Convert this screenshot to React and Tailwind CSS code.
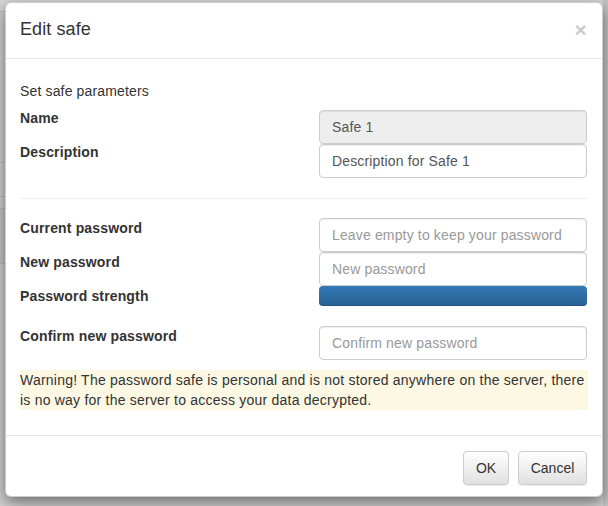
export default function App() {
  const font = { fontFamily: '"Liberation Sans", Arial, Helvetica, sans-serif' };
  const baseInput =
    "block w-full h-[34px] px-[12px] border border-[#ccc] rounded-[4px] text-[14px] text-[#555] shadow-[inset_0_1px_1px_rgba(0,0,0,0.075)] placeholder:text-[#999] outline-none tracking-[0.15px]";
  const inputCls = baseInput + " bg-white";
  const btnCls =
    "h-[34px] border border-[#ccc] rounded-[4px] text-[14px] text-[#333] tracking-normal bg-gradient-to-b from-white to-[#e0e0e0] shadow-[inset_0_1px_0_rgba(255,255,255,0.15),0_1px_1px_rgba(0,0,0,0.075)]";
  return (
    <div className="relative w-[608px] h-[506px] overflow-hidden bg-[#d2d2d2]" style={font}>
      {/* underlying page seen through backdrop */}
      <div className="absolute inset-0 flex flex-col">
        <div className="h-[12px] border-b border-[#bdbdbd] bg-[#d8d8d8]" />
        <div className="h-[151px] border-b border-[#bdbdbd]" />
        <div className="h-[34px] border-b border-[#bdbdbd]" />
        <div className="h-[12px] border-b border-[#bdbdbd]" />
        <div className="h-[55px] border-b border-[#bdbdbd] bg-[#c8c8c8]" />
        <div className="flex-1" />
      </div>
      <div className="absolute top-0 right-0 w-[5px] h-full bg-[#c4c4c4]" />

      <div className="relative ml-[5px] mt-[2px] w-[598px] bg-white border border-[rgba(0,0,0,0.2)] rounded-[6px] shadow-[0_5px_15px_rgba(0,0,0,0.5)] text-[14px] leading-[20px] text-[#333] tracking-[0.15px]">
        {/* header */}
        <div className="flex items-center justify-between h-[56px] pl-[14px] pr-[15px] pb-[3px] border-b border-[#e5e5e5]">
          <h4 className="text-[18px] leading-[26px] text-[#333] tracking-[0.1px]">Edit safe</h4>
          <span className="text-[21px] font-bold leading-none text-black opacity-20">×</span>
        </div>

        {/* body */}
        <div className="px-[14px] pt-[22px] pb-[25px]">
          <p>Set safe parameters</p>
          <div className="mt-[9px] grid grid-cols-[268px_268px] gap-x-[31px]">
            <label className="font-bold -mt-[2px]">Name</label>
            <input className={baseInput + " bg-[#eee]"} value="Safe 1" readOnly />
            <label className="font-bold -mt-[2px]">Description</label>
            <input className={inputCls} value="Description for Safe 1" readOnly />
          </div>

          <hr className="mt-[20px] mb-[19px] border-0 border-t border-[#eee]" />

          <div className="grid grid-cols-[268px_268px] gap-x-[31px]">
            <label className="font-bold">Current password</label>
            <input className={inputCls} placeholder="Leave empty to keep your password" />
            <label className="font-bold">New password</label>
            <input className={inputCls} placeholder="New password" />
            <label className="font-bold h-[40px]">Password strength</label>
            <div className="h-[20px] rounded-[4px] bg-gradient-to-b from-[#337ab7] to-[#286090] shadow-[inset_0_-1px_0_rgba(0,0,0,0.15)]" />
            <label className="font-bold">Confirm new password</label>
            <input className={inputCls} placeholder="Confirm new password" />
          </div>

          <div className="mt-[10px] bg-[#fcf8e3] text-[#333] tracking-[0.22px]">
            Warning! The password safe is personal and is not stored anywhere on the server, there is no way for the server to access your data decrypted.
          </div>
        </div>

        {/* footer */}
        <div className="flex justify-end gap-[9px] pt-[15px] pb-[11px] px-[15px] border-t border-[#e5e5e5]">
          <button className={btnCls + " w-[46px]"}>OK</button>
          <button className={btnCls + " w-[69px]"}>Cancel</button>
        </div>
      </div>
    </div>
  );
}
